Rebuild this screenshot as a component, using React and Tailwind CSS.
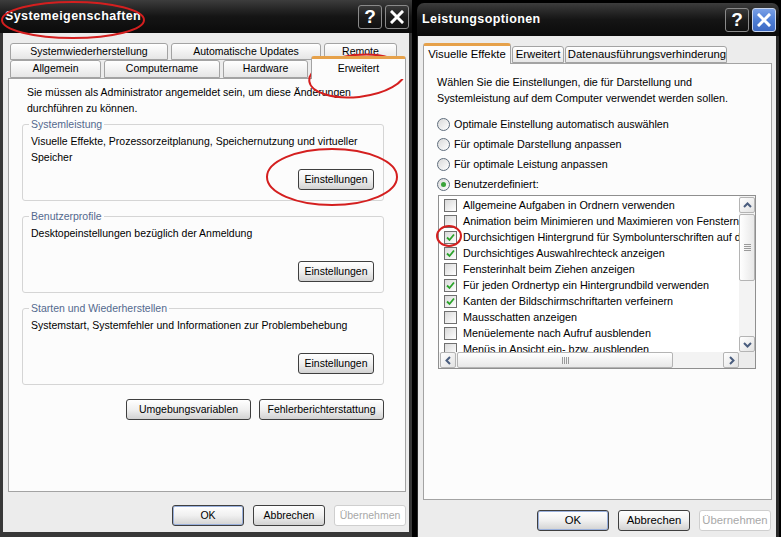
import React from "react";

const sans = "font-['Liberation_Sans',Arial,sans-serif]";

function TitleBtn({ children, blue }) {
  return (
    <div
      className={`flex h-[24px] w-[24px] items-center justify-center rounded-[3px] border ${
        blue
          ? "border-[#c9d6ee] bg-linear-to-b from-[#7aa0e6] via-[#4f7fd6] to-[#3d69c2]"
          : "border-[#8a8a8a] bg-linear-to-b from-[#3a3a3a] via-[#1c1c1c] to-[#101010]"
      }`}
    >
      {children}
    </div>
  );
}

function XGlyph() {
  return (
    <svg width="14" height="14" viewBox="0 0 14 14">
      <path d="M2 2 L12 12 M12 2 L2 12" stroke="white" strokeWidth="3" strokeLinecap="square" />
    </svg>
  );
}

function TitleBar({ title, active, rounded }) {
  return (
    <div
      className={`flex h-[33px] shrink-0 items-center justify-between bg-linear-to-b from-[#3d3d3d] via-[#151515] to-[#0b0b0b] pl-[5px] pr-[3px] ${
        rounded ? "rounded-t-[7px]" : ""
      }`}
    >
      <span className="text-[12.5px] font-bold tracking-[0.4px] text-white">{title}</span>
      <div className="flex gap-[3px]">
        <TitleBtn>
          <span className="text-[19px] font-bold leading-none text-white">?</span>
        </TitleBtn>
        <TitleBtn blue={active}>
          <XGlyph />
        </TitleBtn>
      </div>
    </div>
  );
}

function Btn({ children, w, disabled, def }) {
  return (
    <div
      className={`flex h-[21px] shrink-0 items-center justify-center rounded-[3px] border ${w} ${
        disabled
          ? "border-[#cfcfcf] bg-white text-[#a8a8a8]"
          : "border-[#3f3f3f] bg-linear-to-b from-white via-[#f0f0f0] to-[#d2d2d2] text-black"
      } ${def ? "shadow-[inset_0_0_0_1px_#9ab0dc]" : ""}`}
    >
      {children}
    </div>
  );
}

function Tab({ children, w, active, h }) {
  return (
    <div
      className={`flex shrink-0 items-center justify-center rounded-t-[3px] border border-[#a3a3a3] ${w} ${h} ${
        active
          ? "relative z-10 -mb-px border-b-0 border-t-[3px] border-t-[#e6a14a] bg-[#fcfcfc]"
          : "bg-linear-to-b from-white to-[#e6e6e6]"
      }`}
    >
      {children}
    </div>
  );
}

function Group({ label, text, top }) {
  return (
    <div className={`relative flex h-[77px] w-[362px] flex-col rounded-[3px] border border-[#d5d5d5] pl-[8px] pr-[9px] pt-[8px] pb-[10px] ${top}`}>
      <span className="absolute -top-[8px] left-[6px] bg-[#fcfcfc] px-[2px] leading-[14px] text-[#53698e]">
        {label}
      </span>
      <div className="leading-[16px]">{text}</div>
      <div className="mt-auto flex justify-end">
        <Btn w="w-[76px]">Einstellungen</Btn>
      </div>
    </div>
  );
}

function Check({ on }) {
  return (
    <span className="flex h-[13px] w-[13px] shrink-0 items-center justify-center border border-[#707070] bg-linear-to-br from-[#d9d9d9] to-white">
      {on && (
        <svg width="9" height="9" viewBox="0 0 9 9">
          <path d="M1 4.5 L3.5 7 L8 1.5" fill="none" stroke="#2aa32a" strokeWidth="1.8" />
        </svg>
      )}
    </span>
  );
}

function Radio({ on, label }) {
  return (
    <div className="flex h-[20px] items-center gap-[4px]">
      <span className="flex h-[13px] w-[13px] items-center justify-center rounded-full border border-[#5f6d7c] bg-linear-to-br from-[#d9d9d9] to-white">
        {on && <span className="h-[5px] w-[5px] rounded-full bg-[#3aa33a]" />}
      </span>
      <span>{label}</span>
    </div>
  );
}

function Chevron({ dir }) {
  const d = {
    up: "M2 7 L5.5 3.5 L9 7",
    down: "M2 4 L5.5 7.5 L9 4",
    left: "M7 2 L3.5 5.5 L7 9",
    right: "M4 2 L7.5 5.5 L4 9",
  }[dir];
  return (
    <svg width="11" height="11" viewBox="0 0 11 11">
      <path d={d} fill="none" stroke="#4a5d7e" strokeWidth="2" />
    </svg>
  );
}

function ScrollBtn({ dir }) {
  return (
    <div className="flex h-[16px] w-[16px] shrink-0 items-center justify-center rounded-[2px] border border-[#b4b4b4] bg-linear-to-br from-white to-[#e2e2e2]">
      <Chevron dir={dir} />
    </div>
  );
}

const effects = [
  ["Allgemeine Aufgaben in Ordnern verwenden", false],
  ["Animation beim Minimieren und Maximieren von Fenstern", false],
  ["Durchsichtigen Hintergrund für Symbolunterschriften auf dem Desktop", true],
  ["Durchsichtiges Auswahlrechteck anzeigen", true],
  ["Fensterinhalt beim Ziehen anzeigen", false],
  ["Für jeden Ordnertyp ein Hintergrundbild verwenden", true],
  ["Kanten der Bildschirmschriftarten verfeinern", true],
  ["Mausschatten anzeigen", false],
  ["Menüelemente nach Aufruf ausblenden", false],
  ["Menüs in Ansicht ein- bzw. ausblenden", false],
];

function SystemProperties() {
  return (
    <div className="flex w-[412px] shrink-0 flex-col bg-[#ececec] text-[10.5px]">
      <TitleBar title="Systemeigenschaften" />
      <div className="flex flex-1 flex-col border-x-[3px] border-b-[5px] border-[#383838] pl-[5px] pr-[3px] pt-[10px]">
        <div className="ml-[2px] flex h-[17px] gap-[3px]">
          <Tab w="w-[158px]" h="h-[17px]">Systemwiederherstellung</Tab>
          <Tab w="w-[150px]" h="h-[17px]">Automatische Updates</Tab>
          <Tab w="w-[73px]" h="h-[17px]">Remote</Tab>
        </div>
        <div className="ml-[2px] flex h-[18px] items-end gap-[3px]">
          <Tab w="w-[91px]" h="h-[18px]">Allgemein</Tab>
          <Tab w="w-[116px]" h="h-[18px]">Computername</Tab>
          <Tab w="w-[85px]" h="h-[18px]">Hardware</Tab>
          <Tab w="w-[95px]" h="h-[23px]" active>
            <span className="-mt-[1px]">Erweitert</span>
          </Tab>
        </div>
        <div className="flex h-[414px] w-[398px] flex-col border border-[#a3a3a3] bg-[#fcfcfc] px-[13px] pt-[5px]">
          <p className="pl-[5px] leading-[16px]">
            Sie müssen als Administrator angemeldet sein, um diese Änderungen
            <br />
            durchführen zu können.
          </p>
          <Group
            top="mt-[8px]"
            label="Systemleistung"
            text={
              <>
                Visuelle Effekte, Prozessorzeitplanung, Speichernutzung und virtueller
                <br />
                Speicher
              </>
            }
          />
          <Group top="mt-[15px]" label="Benutzerprofile" text="Desktopeinstellungen bezüglich der Anmeldung" />
          <Group
            top="mt-[15px]"
            label="Starten und Wiederherstellen"
            text="Systemstart, Systemfehler und Informationen zur Problembehebung"
          />
          <div className="mt-[14px] flex w-[362px] justify-end gap-[8px]">
            <Btn w="w-[125px]">Umgebungsvariablen</Btn>
            <Btn w="w-[125px]">Fehlerberichterstattung</Btn>
          </div>
        </div>
        <div className="mt-[13px] flex w-[398px] justify-end gap-[9px]">
          <Btn w="w-[72px]" def>OK</Btn>
          <Btn w="w-[72px]">Abbrechen</Btn>
          <Btn w="w-[72px]" disabled>Übernehmen</Btn>
        </div>
      </div>
    </div>
  );
}

function PerformanceOptions() {
  return (
    <div className="mt-[3px] flex w-[362px] shrink-0 flex-col text-[10.8px]">
      <TitleBar title="Leistungsoptionen" active rounded />
      <div className="flex flex-1 flex-col border-l-[1px] border-r-[3px] border-[#2a2a2a] bg-[#ececec] pl-[5px] pt-[7px]">
        <div className="flex h-[20px] items-end gap-[1px] text-[11.3px]">
          <Tab w="w-[88px]" h="h-[21px]" active>
            <span className="-mt-[2px]">Visuelle Effekte</span>
          </Tab>
          <Tab w="w-[52px]" h="h-[17px]">Erweitert</Tab>
          <Tab w="w-[162px]" h="h-[17px]">
            <span className="ml-[2px]">Datenausführungsverhinderung</span>
          </Tab>
        </div>
        <div className="flex h-[437px] w-[349px] flex-col border border-[#a3a3a3] bg-[#fcfcfc] pl-[13px] pt-[10px]">
          <p className="leading-[16px]">
            Wählen Sie die Einstellungen, die für Darstellung und
            <br />
            Systemleistung auf dem Computer verwendet werden sollen.
          </p>
          <div className="mt-[8px] flex flex-col">
            <Radio label="Optimale Einstellung automatisch auswählen" />
            <Radio label="Für optimale Darstellung anpassen" />
            <Radio label="Für optimale Leistung anpassen" />
            <Radio on label="Benutzerdefiniert:" />
          </div>
          <div className="ml-[1px] mt-[1px] flex h-[174px] w-[318px] flex-col border border-[#8f8f8f] bg-white">
            <div className="flex min-h-0 flex-1">
              <div className="min-w-0 flex-1 overflow-hidden pl-[5px] pt-[1px]">
                {effects.map(([label, on]) => (
                  <div key={label} className="flex h-[16px] items-center gap-[6px] whitespace-nowrap">
                    <Check on={on} />
                    <span>{label}</span>
                  </div>
                ))}
              </div>
              <div className="flex w-[16px] shrink-0 flex-col bg-[#f3f3f3] pt-[1px]">
                <ScrollBtn dir="up" />
                <div className="mt-[1px] flex h-[67px] w-[16px] items-center justify-center rounded-[2px] border border-[#b4b4b4] bg-linear-to-r from-white to-[#e8e8e8]">
                  <div className="flex flex-col gap-[1px]">
                    <span className="h-px w-[7px] bg-[#9a9a9a]" />
                    <span className="h-px w-[7px] bg-[#9a9a9a]" />
                    <span className="h-px w-[7px] bg-[#9a9a9a]" />
                    <span className="h-px w-[7px] bg-[#9a9a9a]" />
                  </div>
                </div>
                <div className="flex-1" />
                <ScrollBtn dir="down" />
              </div>
            </div>
            <div className="flex h-[16px] shrink-0 bg-[#f3f3f3] pl-[1px]">
              <ScrollBtn dir="left" />
              <div className="ml-[1px] flex h-[16px] w-[216px] items-center justify-center gap-[1px] rounded-[2px] border border-[#b4b4b4] bg-linear-to-b from-white to-[#e8e8e8]">
                <span className="h-[7px] w-px bg-[#9a9a9a]" />
                <span className="h-[7px] w-px bg-[#9a9a9a]" />
                <span className="h-[7px] w-px bg-[#9a9a9a]" />
                <span className="h-[7px] w-px bg-[#9a9a9a]" />
              </div>
              <div className="flex-1" />
              <ScrollBtn dir="right" />
              <div className="w-[16px] shrink-0 bg-[#ececec]" />
            </div>
          </div>
        </div>
        <div className="mt-[10px] flex w-[348px] justify-end gap-[9px] text-[11.3px]">
          <Btn w="w-[72px]" def>OK</Btn>
          <Btn w="w-[72px]">Abbrechen</Btn>
          <Btn w="w-[72px]" disabled>Übernehmen</Btn>
        </div>
      </div>
    </div>
  );
}

export default function App() {
  return (
    <div className={`relative flex h-[537px] w-[781px] gap-[5px] overflow-hidden bg-black ${sans}`}>
      <SystemProperties />
      <PerformanceOptions />
      <svg className="pointer-events-none absolute inset-0" width="781" height="537" viewBox="0 0 781 537">
        <g fill="none" stroke="#d41f1f" strokeWidth="2">
          <ellipse cx="73" cy="20" rx="71" ry="18" />
          <ellipse cx="357" cy="76" rx="48" ry="21" transform="rotate(-6 357 76)" />
          <ellipse cx="332" cy="177" rx="65" ry="28" />
          <ellipse cx="449" cy="236" rx="12" ry="10" />
        </g>
      </svg>
    </div>
  );
}
